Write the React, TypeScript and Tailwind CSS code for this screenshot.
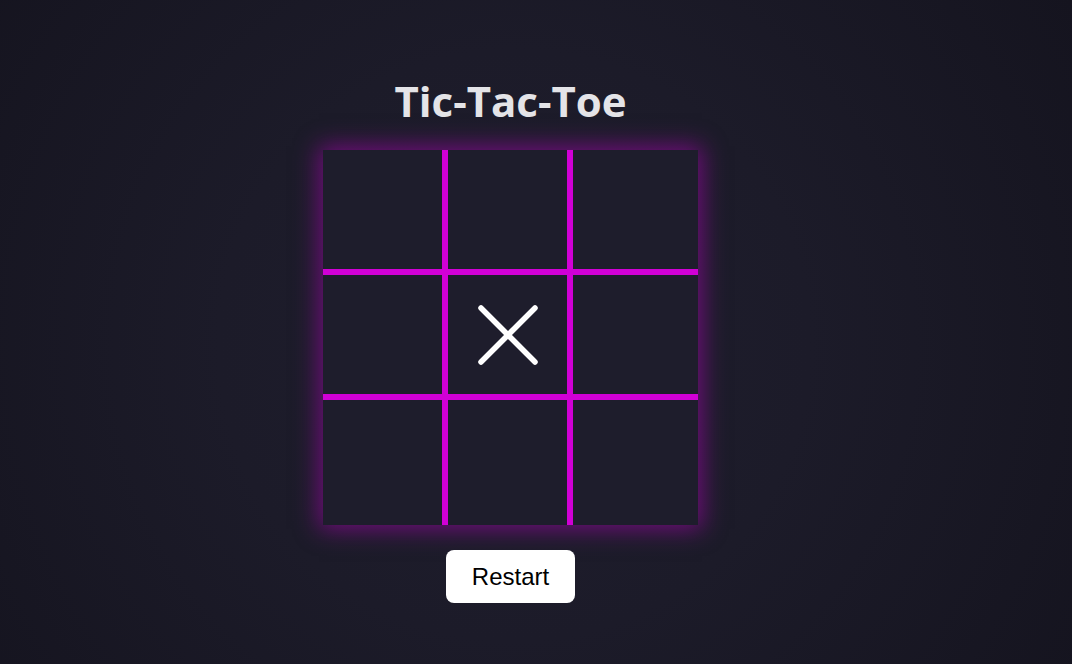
import { useState } from 'react'

// Tic-tac-toe board with a neon grid. Cells are 125px, border-box,
// with right/bottom borders on all but the last column/row.

type Mark = 'X' | 'O' | null

function XMark() {
  return (
    <svg width="62" height="62" viewBox="0 0 62 62" className="block">
      <line x1="4" y1="4" x2="58" y2="58" stroke="white" strokeWidth="5.5" strokeLinecap="round" />
      <line x1="58" y1="4" x2="4" y2="58" stroke="white" strokeWidth="5.5" strokeLinecap="round" />
    </svg>
  )
}

function OMark() {
  return (
    <svg width="62" height="62" viewBox="0 0 62 62" className="block">
      <circle cx="31" cy="31" r="26" fill="none" stroke="white" strokeWidth="5.5" />
    </svg>
  )
}

export default function App() {
  const [cells, setCells] = useState<Mark[]>([null, null, null, null, 'X', null, null, null, null])

  const play = (i: number) => {
    if (cells[i]) return
    const turn = cells.filter(Boolean).length % 2 === 0 ? 'X' : 'O'
    const next = [...cells]
    next[i] = turn
    setCells(next)
  }

  return (
    <div className="min-h-screen w-full bg-[radial-gradient(circle_at_48%_52%,#1f1e2e_0%,#1c1b29_45%,#15141f_100%)] flex flex-col items-center pr-[51px] pt-[76px]">
      <h1
        className="text-[42px] leading-[50px] font-bold text-[#e4e4e8] mb-[24px]"
        style={{ fontFamily: '"Open Sans", "DejaVu Sans", sans-serif' }}
      >
        Tic-Tac-Toe
      </h1>

      <div className="grid grid-cols-[repeat(3,125px)] grid-rows-[repeat(3,125px)] shadow-[0_0_22px_4px_rgba(180,0,190,0.55)]">
        {cells.map((c, i) => {
          const col = i % 3
          const row = Math.floor(i / 3)
          return (
            <button
              key={i}
              onClick={() => play(i)}
              className={`box-border bg-[#1e1d2c] border-[#d100d6] flex items-center justify-center ${
                col < 2 ? 'border-r-[6px]' : ''
              } ${row < 2 ? 'border-b-[6px]' : ''}`}
            >
              {c === 'X' && <XMark />}
              {c === 'O' && <OMark />}
            </button>
          )
        })}
      </div>

      <button
        onClick={() => setCells([null, null, null, null, null, null, null, null, null])}
        className="mt-[25px] h-[53px] px-[26px] bg-white rounded-[8px] text-[24px] text-black"
        style={{ fontFamily: '"Liberation Sans", Arial, sans-serif' }}
      >
        Restart
      </button>
    </div>
  )
}
